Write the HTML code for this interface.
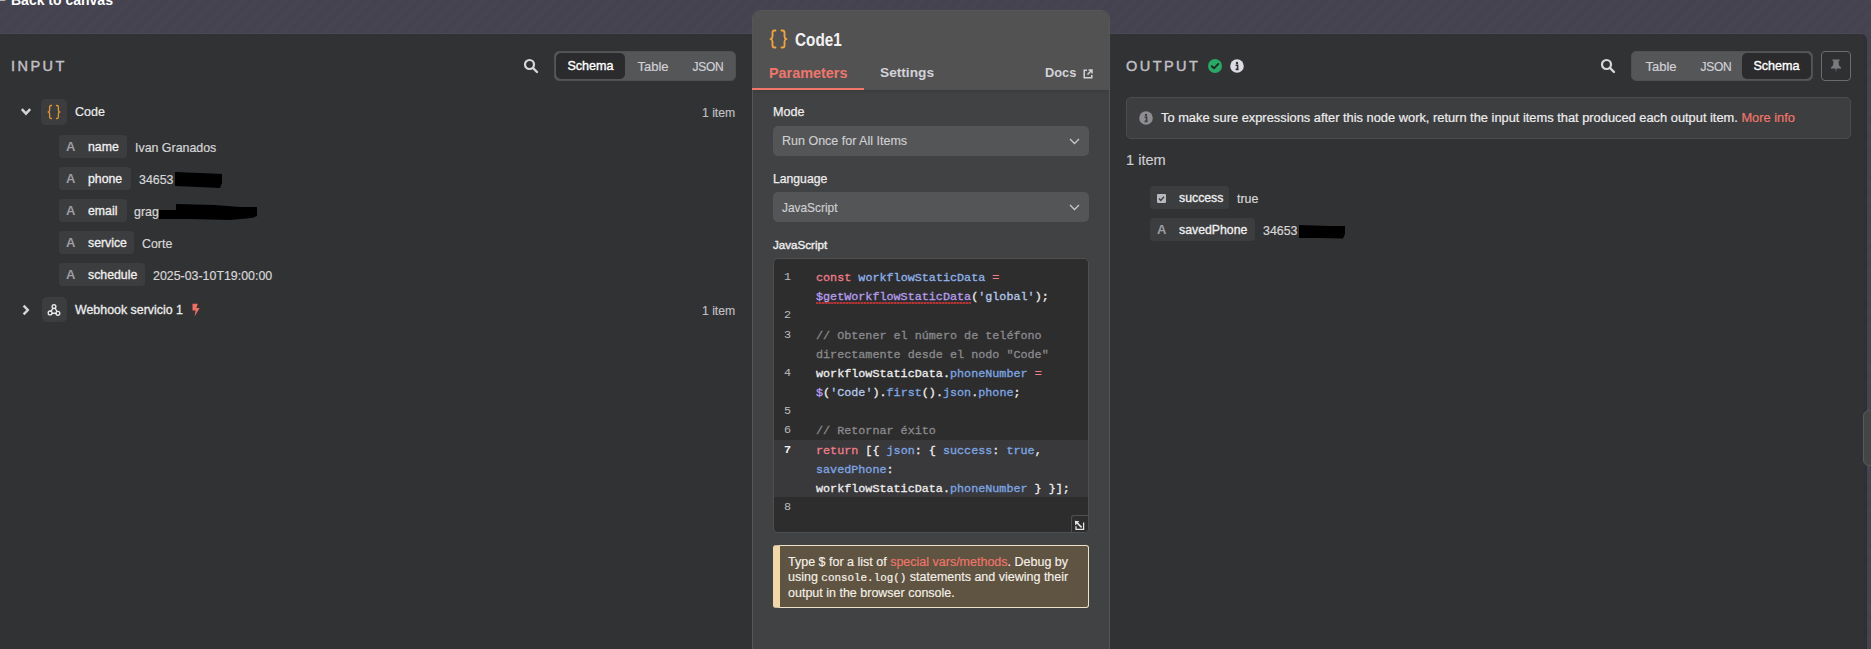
<!DOCTYPE html>
<html><head><meta charset="utf-8">
<style>
*{box-sizing:border-box;margin:0;padding:0}
html,body{width:1871px;height:649px;overflow:hidden}
body{position:relative;font-family:"Liberation Sans",sans-serif;background:#44434f;
background-image:repeating-linear-gradient(135deg,rgba(255,255,255,0.007) 0 5px,rgba(0,0,0,0.007) 5px 10px);color:#e6e6e6}
.abs{position:absolute}
.t1{position:absolute;white-space:nowrap;line-height:1}
#back{position:absolute;left:0;top:0;font-size:14px;font-weight:bold;color:#fff;white-space:nowrap;line-height:1}
#inp{position:absolute;left:0;top:33px;width:770px;height:640px;background:#313234;border-top:1px solid #4a4955}
#out{position:absolute;left:1100px;top:33px;width:767px;height:640px;background:#313234;border-top:1px solid #4a4955;border-right:3px solid #2f2f36;border-top-right-radius:8px}
#mid{position:absolute;left:752px;top:10px;width:358px;height:660px;background:#414243;border:1px solid #555658;border-radius:8px;overflow:hidden}
#midhead{position:absolute;left:0;top:0;width:100%;height:79px;background:#525252}
#midtabline{position:absolute;left:0;top:79px;width:100%;height:1px;background:#4a4b4c}
.lbl{position:absolute;font-size:14.5px;font-weight:normal;-webkit-text-stroke-width:0.45px;letter-spacing:2.45px;color:#c0c0c4;line-height:1;white-space:nowrap}
.seg{position:absolute;height:30px;background:#555658;border:1px solid #4f5052;border-radius:5px}
.seg span{position:absolute;top:1px;height:26px;line-height:27px;font-size:13px;color:#d0d0d6;text-align:center;-webkit-text-stroke-width:0.2px}
.seg span.on{background:#2b2b2d;color:#fff;border-radius:5px;font-size:12.6px;-webkit-text-stroke-width:0.35px}
.pill{position:absolute;height:23px;background:#3c3d3f;border-radius:4px;font-size:12.3px;line-height:24px;color:#f0f0f0;white-space:nowrap}
.pill .A{position:absolute;left:7px;top:0;color:#9c9ca2;font-size:13px;font-weight:bold}
.pill .t{position:absolute;left:29px;top:0;-webkit-text-stroke:0.3px #f0f0f0}
.val{position:absolute;font-size:12.4px;line-height:24px;color:#d6d6d6;white-space:nowrap;-webkit-text-stroke-width:0.2px}
.item{position:absolute;font-size:12.4px;color:#c0c0c4;white-space:nowrap;line-height:1;-webkit-text-stroke-width:0.15px}
.ibox{position:absolute;width:26px;height:26px;background:#3c3d3f;border-radius:5px}
.flbl{position:absolute;font-size:12.2px;color:#ececec;-webkit-text-stroke:0.25px #ececec;white-space:nowrap;line-height:1}
.sel{position:absolute;width:316px;height:30px;background:#545556;border-radius:5px;font-size:12.5px;line-height:31px;padding-left:9px;color:#cfcfd2;white-space:nowrap;-webkit-text-stroke-width:0.15px}
#editor{position:absolute;left:773px;top:258px;width:316px;height:275px;background:#2d2d2e;border:1px solid #4e4f51;border-radius:5px;overflow:hidden}
#actline{position:absolute;left:0;top:181px;width:100%;height:57px;background:#39393b}
#gut div{position:absolute;left:10px;margin-top:9px;font-family:"Liberation Mono",monospace;font-size:11.75px;line-height:19.17px;color:#bdbdbd}
#code{position:absolute;left:42px;top:10px;font-family:"Liberation Mono",monospace;font-size:11.75px;line-height:19.17px;color:#efefef;white-space:pre;-webkit-text-stroke-width:0.3px}
#code .k{color:#f07d88}
#code .d{color:#8fb3ea}
#code .p{color:#7ea7e3}
#code .f{color:#b79ded}
#code .s{color:#b5c8e8}
#code .c{color:#8a8a8c}
#code .u{background-image:repeating-linear-gradient(90deg,#b03636 0 2px,#7a2e2e 2px 3px);background-size:100% 2px;background-position:0 100%;background-repeat:no-repeat}
#resz{position:absolute;right:0;bottom:0;width:17px;height:17px;border-left:1px solid #505052;border-top:1px solid #505052;border-top-left-radius:3px;background:#2d2d2e;padding:2px}
#tip{position:absolute;left:773px;top:545px;width:316px;height:63px;background:#5f5341;border:1px solid #eee2ca;border-left:7px solid #f2d8a6;border-radius:3px;padding:9px 8px 0 8px;font-size:12.5px;line-height:15.2px;color:#f5f1e8;-webkit-text-stroke-width:0.15px}
#tip .mono{font-family:"Liberation Mono",monospace;font-size:10.9px;-webkit-text-stroke-width:0.2px}
#ocall{position:absolute;left:1126px;top:97px;width:725px;height:42px;background:#3d3e40;border:1px solid #4b4c4e;border-radius:5px;font-size:12.85px;color:#ededed;white-space:nowrap;-webkit-text-stroke-width:0.2px}
</style></head><body>
<div id="back"><span style="position:absolute;left:-6px;top:-9px;font-weight:normal">&#8592;</span><span style="position:absolute;left:11px;top:-7px">Back to canvas</span></div>

<div id="inp"></div>
<div id="out"></div>

<!-- INPUT panel content -->
<div class="lbl" style="left:11px;top:59px">INPUT</div>
<svg class="abs" style="left:523px;top:58px" width="16" height="16" viewBox="0 0 16 16"><circle cx="6.5" cy="6.5" r="4.5" fill="none" stroke="#d8d8d8" stroke-width="2.2"/><line x1="10" y1="10" x2="14" y2="14" stroke="#d8d8d8" stroke-width="2.4" stroke-linecap="round"/></svg>
<div class="seg" style="left:554px;top:51px;width:182px">
  <span class="on" style="left:1px;width:69px">Schema</span>
  <span style="left:70px;width:56px">Table</span>
  <span style="left:126px;width:54px;font-size:12px;letter-spacing:-0.3px;line-height:28px">JSON</span>
</div>

<svg class="abs" style="left:20px;top:107px" width="12" height="10" viewBox="0 0 12 10"><polyline points="1.8,2.2 6,6.6 10.2,2.2" fill="none" stroke="#d4d4d4" stroke-width="2.5"/></svg>
<div class="ibox" style="left:41px;top:99px"></div>
<svg class="abs" style="left:47px;top:104px" width="14" height="16" viewBox="0 0 14 16"><path d="M4.5 1.5 H4 Q2.6 1.5 2.6 3 V6.3 Q2.6 7.8 1.2 8 Q2.6 8.2 2.6 9.7 V13 Q2.6 14.5 4 14.5 H4.5 M9.5 1.5 H10 Q11.4 1.5 11.4 3 V6.3 Q11.4 7.8 12.8 8 Q11.4 8.2 11.4 9.7 V13 Q11.4 14.5 10 14.5 H9.5" fill="none" stroke="#e8962c" stroke-width="1.3" stroke-linecap="round" stroke-linejoin="round"/></svg>
<div class="item" style="left:75px;top:106px;font-size:12.5px;color:#ececec;-webkit-text-stroke:0.2px #ececec">Code</div>
<div class="item" style="left:702px;top:107px;font-size:12.2px">1 item</div>

<div class="pill" style="left:59px;top:135px;width:68px"><span class="A">A</span><span class="t">name</span></div>
<div class="val" style="left:135px;top:136px">Ivan Granados</div>
<div class="pill" style="left:59px;top:167px;width:72px"><span class="A">A</span><span class="t">phone</span></div>
<div class="val" style="left:139px;top:168px">34653</div>
<div class="pill" style="left:59px;top:199px;width:68px"><span class="A">A</span><span class="t">email</span></div>
<div class="val" style="left:134px;top:200px">grag</div>
<div class="pill" style="left:59px;top:231px;width:75px"><span class="A">A</span><span class="t">service</span></div>
<div class="val" style="left:142px;top:232px">Corte</div>
<div class="pill" style="left:59px;top:263px;width:86px"><span class="A">A</span><span class="t">schedule</span></div>
<div class="val" style="left:153px;top:264px">2025-03-10T19:00:00</div>

<svg class="abs" style="left:0;top:0" width="1871" height="649"><polygon points="175,172 200,173 222,174 222,183 220,188 198,187 175,186" fill="#000"/><polygon points="159,210 176,210 176,204 215,205 240,207 257,207 257,216 252,218 230,220 190,219 159,219" fill="#000"/><polygon points="1299,225 1330,226 1345,226 1345,234 1343,238.5 1320,238 1299,238" fill="#000"/></svg>

<svg class="abs" style="left:20px;top:303px" width="12" height="14" viewBox="0 0 12 14"><polyline points="3.6,2.6 7.8,7 3.6,11.4" fill="none" stroke="#d4d4d4" stroke-width="2.5"/></svg>
<div class="ibox" style="left:42px;top:297px;width:25px;height:25px"></div>
<svg class="abs" style="left:47px;top:303px" width="14" height="14" viewBox="0 0 14 14"><g fill="none" stroke="#e8e8e8" stroke-width="1.35" stroke-linecap="round"><circle cx="7" cy="3.6" r="1.9"/><circle cx="3.1" cy="9.9" r="1.9"/><circle cx="10.9" cy="10.3" r="1.9"/><path d="M6 5.3 L3.9 8.2 M5 10.2 H9 M8 5 L10 8.6"/></g></svg>
<div class="item" style="left:75px;top:304px;font-size:12.4px;color:#ececec;-webkit-text-stroke:0.3px #ececec">Webhook servicio 1</div>
<svg class="abs" style="left:191px;top:303px" width="10" height="14" viewBox="0 0 10 14"><path d="M1.5 0.8 H6.8 L5.4 5 H8.6 L3.6 13.4 L4.6 7.6 H1.5 Z" fill="#f26e62"/></svg>
<div class="item" style="left:702px;top:305px;font-size:12.2px">1 item</div>

<!-- MIDDLE panel -->
<div id="mid">
  <div id="midhead"></div>
  <div id="midtabline" style="background:transparent"></div>
  <div style="position:absolute;left:0;top:79px;width:100%;height:4px;background:linear-gradient(#3b3c3e,#414243)"></div>
</div>
<svg class="abs" style="left:769px;top:29px" width="19" height="20" viewBox="0 0 19 20"><path d="M6.5 1.5 H5.5 Q3.5 1.5 3.5 3.5 V7.5 Q3.5 9.5 1.5 10 Q3.5 10.5 3.5 12.5 V16.5 Q3.5 18.5 5.5 18.5 H6.5 M12.5 1.5 H13.5 Q15.5 1.5 15.5 3.5 V7.5 Q15.5 9.5 17.5 10 Q15.5 10.5 15.5 12.5 V16.5 Q15.5 18.5 13.5 18.5 H12.5" fill="none" stroke="#f4a53a" stroke-width="1.8" stroke-linecap="round" stroke-linejoin="round"/></svg>
<div class="t1" style="left:795px;top:31px;font-size:18px;font-weight:bold;color:#f2f2f2;transform:scaleX(0.85);transform-origin:0 0">Code1</div>
<div class="t1" style="left:769px;top:66px;font-size:14.4px;font-weight:bold;color:#f0766a">Parameters</div>
<div class="abs" style="left:752px;top:88px;width:112px;height:2px;background:#f0766a"></div>
<div class="t1" style="left:880px;top:66px;font-size:13.7px;font-weight:bold;color:#d2d2d8">Settings</div>
<div class="t1" style="left:1045px;top:67px;font-size:12.8px;font-weight:bold;color:#d2d2d8">Docs</div>
<svg class="abs" style="left:1083px;top:69px" width="10" height="10" viewBox="0 0 10 10"><path d="M4 1.2 H1.2 V8.8 H8.8 V6 M5.5 1 H9 V4.5 M9 1 L4.5 5.5" fill="none" stroke="#d2d2d8" stroke-width="1.5"/></svg>

<div class="flbl" style="left:773px;top:106px;font-size:12.6px">Mode</div>
<div class="sel" style="left:773px;top:126px">Run Once for All Items<svg width="11" height="7" viewBox="0 0 11 7" style="position:absolute;left:296px;top:12px"><polyline points="1,1 5.5,5.5 10,1" fill="none" stroke="#c8c8cc" stroke-width="1.3"/></svg></div>
<div class="flbl" style="left:773px;top:173px">Language</div>
<div class="sel" style="left:773px;top:192px;font-size:11.9px;line-height:32px">JavaScript<svg width="11" height="7" viewBox="0 0 11 7" style="position:absolute;left:296px;top:12px"><polyline points="1,1 5.5,5.5 10,1" fill="none" stroke="#c8c8cc" stroke-width="1.3"/></svg></div>
<div class="flbl" style="left:773px;top:239px;font-size:11.6px;-webkit-text-stroke-width:0.4px">JavaScript</div>

<div id="editor">
  <div id="actline"></div>
  <div id="gut">
    <div style="top:0">1</div><div style="top:38.3px">2</div><div style="top:57.5px">3</div><div style="top:95.8px">4</div><div style="top:134.2px">5</div><div style="top:153.3px">6</div><div style="top:172.5px;color:#f2f2f2;font-weight:bold">7</div><div style="top:230px">8</div>
  </div>
  <div id="code"><span class="k">const</span> <span class="d">workflowStaticData</span> <span class="k">=</span>
<span class="u"><span class="f">$getWorkflowStaticData</span></span>(<span class="s">'global'</span>);

<span class="c">// Obtener el número de teléfono</span>
<span class="c">directamente desde el nodo "Code"</span>
workflowStaticData.<span class="p">phoneNumber</span> <span class="k">=</span>
<span class="f">$</span>(<span class="s">'Code'</span>).<span class="p">first</span>().<span class="p">json</span>.<span class="p">phone</span>;

<span class="c">// Retornar éxito</span>
<span class="k">return</span> [{ <span class="p">json</span>: { <span class="p">success</span>: <span class="p">true</span>,
<span class="p">savedPhone</span>:
workflowStaticData.<span class="p">phoneNumber</span> } }];
</div>
  <div id="resz"><svg width="12" height="12" viewBox="0 0 12 12"><path d="M9.6 2.4 V9.4 H2 V6.2" fill="none" stroke="#e4e4e4" stroke-width="1.3"/><path d="M7.6 7.4 L2.6 2.4" stroke="#e4e4e4" stroke-width="1.5"/><path d="M0.8 0.8 L5.4 1.3 L1.3 5.4 Z" fill="#e4e4e4"/></svg></div>
</div>

<div id="tip">Type $ for a list of <span style="color:#f0766a">special vars/methods</span>. Debug by using <span class="mono">console.log()</span> statements and viewing their output in the browser console.</div>

<!-- OUTPUT panel content -->
<div class="lbl" style="left:1126px;top:59px">OUTPUT</div>
<svg class="abs" style="left:1208px;top:59px" width="14" height="14" viewBox="0 0 14 14"><circle cx="7" cy="7" r="7" fill="#2aa866"/><polyline points="3.8,7.2 6,9.3 10.3,4.9" fill="none" stroke="#1f2a24" stroke-width="1.9" stroke-linecap="round" stroke-linejoin="round"/></svg>
<svg class="abs" style="left:1230px;top:59px" width="14" height="14" viewBox="0 0 14 14"><circle cx="7" cy="7" r="6.8" fill="#dcdce2"/><circle cx="7" cy="4" r="1.2" fill="#313234"/><path d="M5.6 6.2 H7.6 V10.4 H8.4 M5.6 10.4 H8.6" fill="none" stroke="#313234" stroke-width="1.6"/></svg>
<svg class="abs" style="left:1600px;top:58px" width="16" height="16" viewBox="0 0 16 16"><circle cx="6.5" cy="6.5" r="4.5" fill="none" stroke="#d8d8d8" stroke-width="2.2"/><line x1="10" y1="10" x2="14" y2="14" stroke="#d8d8d8" stroke-width="2.4" stroke-linecap="round"/></svg>
<div class="seg" style="left:1631px;top:51px;width:182px">
  <span style="left:1px;width:56px">Table</span>
  <span style="left:57px;width:54px;font-size:12px;letter-spacing:-0.3px;line-height:28px">JSON</span>
  <span class="on" style="left:110px;width:69px">Schema</span>
</div>
<div class="abs" style="left:1821px;top:51px;width:30px;height:30px;border:1px solid #6c6c70;border-radius:4px;background:#2f3032"></div>
<svg class="abs" style="left:1829px;top:58px" width="14" height="16" viewBox="0 0 14 16"><path d="M3.5 1.5 H10.5 V3 H9.5 L10 7.5 L12 9.5 V10.5 H7.6 L7 14.5 L6.4 10.5 H2 V9.5 L4 7.5 L4.5 3 H3.5 Z" fill="#7a7a7e"/></svg>

<div id="ocall"><svg class="abs" style="left:12px;top:13px" width="14" height="14" viewBox="0 0 14 14"><circle cx="7" cy="7" r="6.8" fill="#8d8d92"/><circle cx="7" cy="4" r="1.2" fill="#3e3f41"/><path d="M5.6 6.2 H7.6 V10.4 H8.4 M5.6 10.4 H8.6" fill="none" stroke="#3e3f41" stroke-width="1.6"/></svg><span style="position:absolute;left:34px;top:13px;line-height:1.15">To make sure expressions after this node work, return the input items that produced each output item. <span style="color:#f0766a">More info</span></span></div>
<div class="item" style="left:1126px;top:153px;font-size:14.6px;color:#cfcfd2">1 item</div>

<div class="pill" style="left:1150px;top:186px;width:79px"><svg class="abs" style="left:7px;top:8px" width="9" height="9" viewBox="0 0 9 9"><rect x="0" y="0" width="9" height="9" rx="1" fill="#b8b8c0"/><polyline points="2,4.6 3.8,6.4 7,2.8" fill="none" stroke="#3c3d3f" stroke-width="1.4"/></svg><span class="t">success</span></div>
<div class="val" style="left:1237px;top:187px">true</div>
<div class="pill" style="left:1150px;top:218px;width:105px"><span class="A">A</span><span class="t">savedPhone</span></div>
<div class="val" style="left:1263px;top:219px">34653</div>

<div class="abs" style="left:1863px;top:410px;width:12px;height:56px;border-radius:6px;background:#444547;border:1px solid #58595b"></div>
</body></html>
